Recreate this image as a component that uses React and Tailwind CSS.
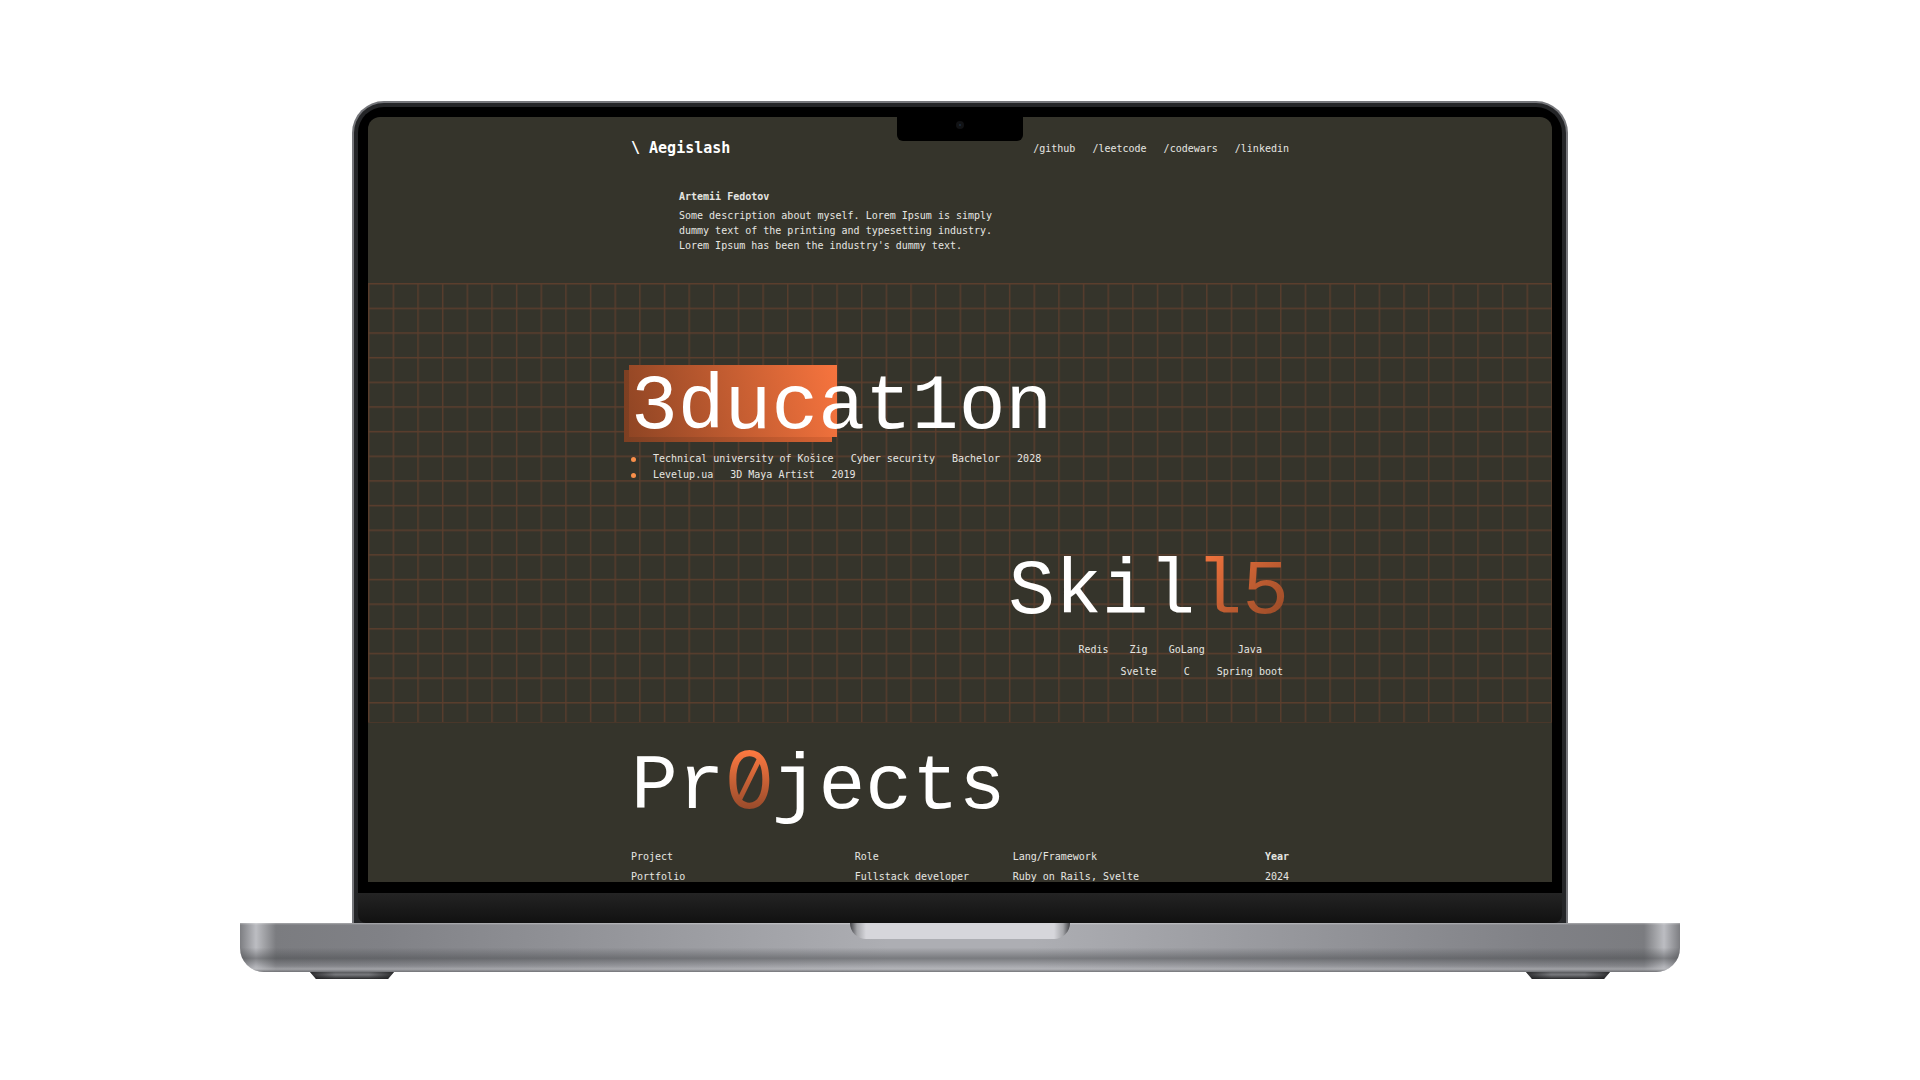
import React from "react";

const links = ["github", "leetcode", "codewars", "linkedin"];

const education = [
  ["Technical university of Košice", "Cyber security", "Bachelor", "2028"],
  ["Levelup.ua", "3D Maya Artist", "2019"],
];

const projects = [
  { name: "Portfolio", role: "Fullstack developer", stack: "Ruby on Rails, Svelte", year: "2024" },
];

function GridLines() {
  return (
    <svg className="absolute inset-0 h-full w-full" aria-hidden="true">
      <defs>
        <pattern id="cells" width="24.65" height="24.65" patternUnits="userSpaceOnUse">
          <path d="M0 0.75H24.65M0.75 0V24.65" stroke="#5b3e2d" strokeWidth="1.3" fill="none" />
        </pattern>
      </defs>
      <rect width="100%" height="100%" fill="url(#cells)" />
    </svg>
  );
}

function Header() {
  return (
    <header className="mx-auto flex h-[62px] w-full max-w-[658px] items-center justify-between">
      <a href="#home" className="text-[15px] font-bold whitespace-pre text-white">
        {"\\ Aegislash"}
      </a>
      <nav className="flex gap-[17px]">
        {links.map((l) => (
          <a key={l} href={"#" + l}>
            /{l}
          </a>
        ))}
      </nav>
    </header>
  );
}

function Intro() {
  return (
    <section className="mx-auto h-[104px] w-full max-w-[658px] pt-2.5 pl-12">
      <h2 className="h-[19px] font-bold">Artemii Fedotov</h2>
      <p className="w-[320px]">
        Some description about myself. Lorem Ipsum is simply dummy text of the printing and
        typesetting industry. Lorem Ipsum has been the industry's dummy text.
      </p>
    </section>
  );
}

function Education() {
  return (
    <section className="relative mx-auto w-full max-w-[658px] pt-[84px]">
      <h1 className="relative font-['Liberation_Mono',monospace] text-[78px] leading-[80px] text-white">
        <span className="absolute top-[3px] -left-[7px] h-[72px] w-[208px] bg-linear-to-r from-[#7d3f22] to-[#d96333]" />
        <span className="absolute -top-[2px] -left-[2px] h-[72px] w-[208px] bg-[linear-gradient(75deg,#8f4524_0%,#f7743e_100%)]" />
        <span className="relative">3ducat1on</span>
      </h1>
      <ul className="pt-1 leading-4">
        {education.map((row) => (
          <li key={row[0]} className="flex items-center gap-[17px]">
            <span className="size-[5px] rounded-full bg-[#f98f4a]" />
            {row.map((cell) => (
              <span key={cell}>{cell}</span>
            ))}
          </li>
        ))}
      </ul>
    </section>
  );
}

function Skills() {
  return (
    <section className="relative mx-auto flex w-full max-w-[658px] flex-col items-end pt-[69px]">
      <h1 className="font-['Liberation_Mono',monospace] text-[78px] leading-[80px] text-white">
        Skil
        <span className="bg-linear-to-br from-[#fb7840] to-[#8a4424] bg-clip-text text-transparent">
          l5
        </span>
      </h1>
      <ul className="grid grid-cols-[auto_auto_auto_auto] justify-items-center gap-x-3 pt-[7px] pr-1.5 leading-[22px]">
        <li>Redis</li>
        <li>Zig</li>
        <li>GoLang</li>
        <li>Java</li>
        <li className="col-start-2">Svelte</li>
        <li>C</li>
        <li>Spring boot</li>
      </ul>
    </section>
  );
}

function Projects() {
  return (
    <section className="mx-auto w-full max-w-[658px] pt-[17px]">
      <h1 className="flex h-20 items-baseline font-['Liberation_Mono',monospace] text-[78px] leading-[80px] text-white">
        Pr
        <span className="w-[47px] bg-linear-to-b from-[#fb7840] from-15% to-[#94492a] to-90% bg-clip-text text-center font-['Inter'] text-transparent [font-feature-settings:'zero']">
          0
        </span>
        jects
      </h1>
      <table className="mt-[27px] w-full table-fixed text-left leading-5">
        <colgroup>
          <col className="w-[34%]" />
          <col className="w-[24%]" />
          <col />
          <col className="w-[10%]" />
        </colgroup>
        <thead>
          <tr>
            <th className="font-normal">Project</th>
            <th className="font-normal">Role</th>
            <th className="font-normal">Lang/Framework</th>
            <th className="text-right font-bold">Year</th>
          </tr>
        </thead>
        <tbody>
          {projects.map((p) => (
            <tr key={p.name}>
              <td>{p.name}</td>
              <td>{p.role}</td>
              <td>{p.stack}</td>
              <td className="text-right">{p.year}</td>
            </tr>
          ))}
        </tbody>
      </table>
    </section>
  );
}

function Notch() {
  return (
    <div className="absolute inset-x-0 top-0 z-10 flex justify-center">
      <div className="flex h-6 w-[126px] justify-center rounded-b-md bg-black pt-1">
        <span className="flex size-2 items-center justify-center rounded-full bg-[#111214]">
          <span className="size-0.5 rounded-full bg-[#1d2c3c]" />
        </span>
      </div>
    </div>
  );
}

function Foot() {
  return (
    <svg className="h-[7px] w-[84px]" viewBox="0 0 84 7" preserveAspectRatio="none" aria-hidden="true">
      <defs>
        <linearGradient id="foot" x1="0" y1="0" x2="0" y2="1">
          <stop offset="0" stopColor="#5a5b5e" />
          <stop offset="0.4" stopColor="#77787c" />
          <stop offset="1" stopColor="#2a2a2c" />
        </linearGradient>
        <linearGradient id="footEnds">
          <stop offset="0" stopColor="#1c1c1e" stopOpacity="0.8" />
          <stop offset="0.3" stopColor="#1c1c1e" stopOpacity="0" />
          <stop offset="0.7" stopColor="#1c1c1e" stopOpacity="0" />
          <stop offset="1" stopColor="#1c1c1e" stopOpacity="0.8" />
        </linearGradient>
      </defs>
      <path d="M0 0H84L78 7H6Z" fill="url(#foot)" />
      <path d="M0 0H84L78 7H6Z" fill="url(#footEnds)" />
    </svg>
  );
}

export default function App() {
  return (
    <main className="flex min-h-screen items-center justify-center bg-white">
      <div className="w-3/4">
        <div className="px-28">
          <div className="rounded-t-[32px] bg-[#75767a] px-0.5 pt-0.5">
            <div className="rounded-t-[30px] bg-[#242527] px-1 pt-1">
              <div className="rounded-t-[26px] bg-black px-2.5 pt-2.5">
                <div className="relative aspect-[1184/765] overflow-hidden rounded-t-xl bg-[#35342b] font-['DejaVu_Sans_Mono',monospace] text-[10px] leading-[15px] text-[#e6e6e2]">
                  <Notch />
                  <div className="flex flex-col">
                    <Header />
                    <Intro />
                    <div className="relative h-[440px] border-b border-[#49372a]">
                      <GridLines />
                      <Education />
                      <Skills />
                    </div>
                    <Projects />
                  </div>
                </div>
                <div className="h-[11px]" />
              </div>
              <div className="h-[30px] rounded-b-lg bg-linear-to-b from-[#242424] to-[#111111]" />
            </div>
          </div>
        </div>
        <div className="overflow-hidden rounded-b-[24px] bg-[linear-gradient(90deg,#7d7e82_0,#bcbdc2_16px,#a9aaae_22px,#7b7c80_36px,#808186_140px,#adaeb3_45%,#adaeb3_55%,#808186_calc(100%_-_140px),#7b7c80_calc(100%_-_36px),#a9aaae_calc(100%_-_22px),#bcbdc2_calc(100%_-_16px),#7d7e82_100%)]">
          <div className="flex h-[49px] justify-center bg-[linear-gradient(180deg,rgba(255,255,255,0.35)_0,rgba(255,255,255,0)_2px,rgba(255,255,255,0)_50%,rgba(70,72,75,0.5)_72%,rgba(150,151,156,0.3)_88%,rgba(185,186,190,0.6)_94%,rgba(110,111,115,0.9)_100%)]">
            <div className="h-4 w-[220px] rounded-b-2xl bg-[linear-gradient(90deg,#3f4044_0,#a5a6aa_7px,#d6d6db_16px,#d6d6db_calc(100%_-_16px),#a5a6aa_calc(100%_-_7px),#3f4044_100%)]" />
          </div>
        </div>
        <div className="flex justify-between px-[70px]">
          <Foot />
          <Foot />
        </div>
      </div>
    </main>
  );
}
